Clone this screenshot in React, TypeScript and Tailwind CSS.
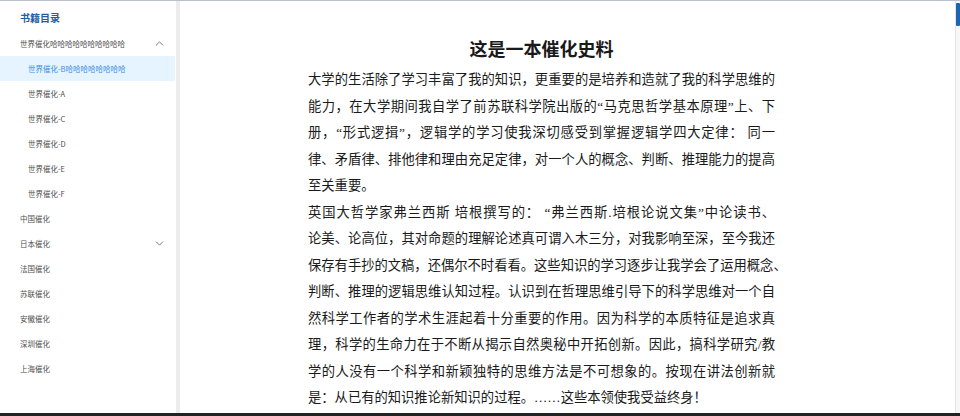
import { ChevronDown, ChevronUp } from 'lucide-react';

const menu = [
  {
    label: '世界催化哈哈哈哈哈哈哈哈哈哈',
    open: true,
    children: ['世界催化-B哈哈哈哈哈哈哈哈', '世界催化-A', '世界催化-C', '世界催化-D', '世界催化-E', '世界催化-F'],
  },
  { label: '中国催化' },
  { label: '日本催化', open: false, children: [] },
  { label: '法国催化' },
  { label: '苏联催化' },
  { label: '安徽催化' },
  { label: '深圳催化' },
  { label: '上海催化' },
];

const paragraphs = [
  [
    '大学的生活除了学习丰富了我的知识，更重要的是培养和造就了我的科学思维的',
    '能力，在大学期间我自学了前苏联科学院出版的“马克思哲学基本原理”上、下',
    '册，“形式逻揖”，逻辑学的学习使我深切感受到掌握逻辑学四大定律： 同一',
    '律、矛盾律、排他律和理由充足定律，对一个人的概念、判断、推理能力的提高',
    '至关重要。',
  ],
  [
    '英国大哲学家弗兰西斯 培根撰写的：  “弗兰西斯.培根论说文集”中论读书、',
    '论美、论高位，其对命题的理解论述真可谓入木三分，对我影响至深，至今我还',
    '保存有手抄的文稿，还偶尔不时看看。这些知识的学习逐步让我学会了运用概念、',
    '判断、推理的逻辑思维认知过程。认识到在哲理思维引导下的科学思维对一个自',
    '然科学工作者的学术生涯起着十分重要的作用。因为科学的本质特征是追求真',
    '理，科学的生命力在于不断从揭示自然奥秘中开拓创新。因此，搞科学研究/教',
    '学的人没有一个科学和新颖独特的思维方法是不可想象的。按现在讲法创新就',
    '是：从已有的知识推论新知识的过程。……这些本领使我受益终身！',
  ],
];

export default function App() {
  return (
    <div className="flex h-[416px] w-[960px] flex-col overflow-hidden bg-white font-['Noto_Sans_CJK_SC',sans-serif]">
      <div className="h-px bg-[#b9c2cc]"></div>
      <div className="flex min-h-0 flex-1">
        {/* 侧边目录 */}
        <aside className="w-[176px] shrink-0 pt-[9px]">
          <h2 className="mb-[5px] pl-[20px] text-[10px] leading-[16px] font-bold text-[#1d5fa8]">书籍目录</h2>
          {menu.map((item) => (
            <div key={item.label}>
              <div className="flex h-[25px] items-center justify-between pr-[10px] pl-[20px] text-[7.5px] text-[#505050]">
                <span>{item.label}</span>
                {item.children &&
                  (item.open ? (
                    <ChevronUp className="h-[13px] w-[13px] text-[#666]" strokeWidth={1.6} />
                  ) : (
                    <ChevronDown className="h-[13px] w-[13px] text-[#666]" strokeWidth={1.6} />
                  ))}
              </div>
              {item.open &&
                item.children?.map((child, i) => (
                  <div
                    key={child}
                    className={`flex h-[25px] items-center pl-[28px] text-[7.5px] ${
                      i === 0 ? 'mr-px bg-[#e6f4ff] text-[#3a8ee6]' : 'text-[#505050]'
                    }`}
                  >
                    {child}
                  </div>
                ))}
            </div>
          ))}
        </aside>
        <div className="w-[4px] shrink-0 bg-[#ececec]"></div>

        {/* 正文 */}
        <main className="min-w-0 flex-1 pt-[36px] pl-[128px]">
          <div className="w-[467px] font-['Liberation_Serif','Noto_Sans_CJK_SC',serif] text-[#1a1a1a]">
            <h1 className="mb-[4px] text-center text-[18px] leading-[26px] font-bold">这是一本催化史料</h1>
            {paragraphs.map((lines, p) => (
              <div key={p}>
                {lines.map((line, i) => (
                  <div
                    key={i}
                    className={`h-[26.5px] text-[13.3px] leading-[26.5px] whitespace-nowrap ${
                      i < lines.length - 1 ? 'text-justify [text-align-last:justify]' : ''
                    }`}
                  >
                    {line}
                  </div>
                ))}
              </div>
            ))}
          </div>
        </main>

        {/* 滚动条 */}
        <div className="flex w-[5px] shrink-0 flex-col border-l border-[#e4e4e4] bg-[#f7f7f7] pt-[2px]">
          <div className="h-[23px] rounded-[1px] bg-[#1e64b4]"></div>
        </div>
      </div>
      <div className="h-[3px] bg-[#222]"></div>
    </div>
  );
}
